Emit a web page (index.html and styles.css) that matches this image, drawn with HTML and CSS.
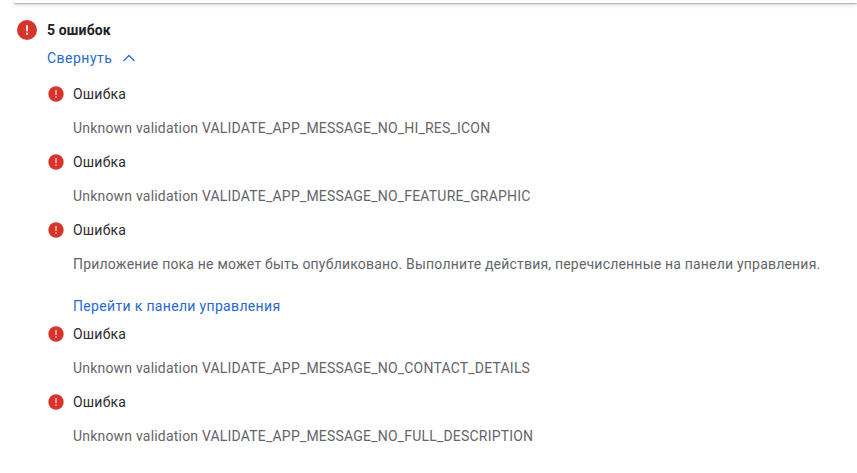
FILE: index.html
```html
<!DOCTYPE html>
<html lang="ru">
<head>
  <meta charset="UTF-8">
  <title>Ошибки</title>
  <link rel="stylesheet" href="styles.css">
</head>
<body>
  <div class="top-line"></div>

  <div class="summary">
    <svg class="icon-big" viewBox="0 0 20 20"><circle cx="10" cy="10" r="10" fill="#d6352c"/><path d="M10 5.2v6M10 12.8v2" stroke="#fff" stroke-width="1.7"/></svg>
    <div class="content">
      <h2 class="title">5 ошибок</h2>
      <a class="toggle" href="#">Свернуть
        <svg class="chevron" viewBox="0 0 12 8"><path d="M.5 7L6 1.5 11.500 7" fill="none" stroke="#2f6bcb" stroke-width="1.3"/></svg>
      </a>

      <ul class="errors">
        <li class="error">
          <svg class="icon" viewBox="0 0 16 16"><circle cx="8" cy="8" r="7.700" fill="#d6352c"/><path d="M8 4v5M8 10.300v1.600" stroke="#fbdcda" stroke-width="1.200"/></svg>
          <div class="error-body">
            <h3>Ошибка</h3>
            <p>Unknown validation VALIDATE_APP_MESSAGE_NO_HI_RES_ICON</p>
          </div>
        </li>
        <li class="error">
          <svg class="icon" viewBox="0 0 16 16"><circle cx="8" cy="8" r="7.700" fill="#d6352c"/><path d="M8 4v5M8 10.300v1.600" stroke="#fbdcda" stroke-width="1.200"/></svg>
          <div class="error-body">
            <h3>Ошибка</h3>
            <p>Unknown validation VALIDATE_APP_MESSAGE_NO_FEATURE_GRAPHIC</p>
          </div>
        </li>
        <li class="error">
          <svg class="icon" viewBox="0 0 16 16"><circle cx="8" cy="8" r="7.700" fill="#d6352c"/><path d="M8 4v5M8 10.300v1.600" stroke="#fbdcda" stroke-width="1.200"/></svg>
          <div class="error-body">
            <h3>Ошибка</h3>
            <p>Приложение пока не может быть опубликовано. Выполните действия, перечисленные на панели управления.</p>
            <a class="link" href="#">Перейти к панели управления</a>
          </div>
        </li>
        <li class="error">
          <svg class="icon" viewBox="0 0 16 16"><circle cx="8" cy="8" r="7.700" fill="#d6352c"/><path d="M8 4v5M8 10.300v1.600" stroke="#fbdcda" stroke-width="1.200"/></svg>
          <div class="error-body">
            <h3>Ошибка</h3>
            <p>Unknown validation VALIDATE_APP_MESSAGE_NO_CONTACT_DETAILS</p>
          </div>
        </li>
        <li class="error">
          <svg class="icon" viewBox="0 0 16 16"><circle cx="8" cy="8" r="7.700" fill="#d6352c"/><path d="M8 4v5M8 10.300v1.600" stroke="#fbdcda" stroke-width="1.200"/></svg>
          <div class="error-body">
            <h3>Ошибка</h3>
            <p>Unknown validation VALIDATE_APP_MESSAGE_NO_FULL_DESCRIPTION</p>
          </div>
        </li>
      </ul>
    </div>
  </div>
</body>
</html>
```
FILE: styles.css
```css
body {
  margin: 0;
  background: #fff;
  font-family: Roboto, sans-serif;
  font-size: 14px;
  line-height: 20px;
  letter-spacing: 0.2px;
  color: #2b2c2f;
  overflow: hidden;
}

.top-line {
  height: 3px;
  margin-left: 14px;
  background: #fff;
  box-shadow: 0 1px 2px rgba(0, 0, 0, 0.3), 0 2px 5px rgba(0, 0, 0, 0.12);
}

.summary {
  display: flex;
  gap: 10px;
  padding: 17px 0 0 17px;
}

.icon-big {
  width: 20px;
  height: 20px;
  flex: none;
}

.title {
  margin: 0;
  font-size: 14px;
  font-weight: 700;
  letter-spacing: 0.15px;
  color: #202124;
}

.toggle {
  display: flex;
  align-items: center;
  gap: 11px;
  margin-top: 8px;
  color: #2a69cb;
  letter-spacing: 0.48px;
  text-decoration: none;
}

.chevron {
  width: 12px;
  height: 8px;
}

.errors {
  list-style: none;
  margin: 16px 0 0;
  padding: 0;
}

.error {
  display: flex;
  gap: 9px;
  margin-bottom: 14px;
  padding-left: 1px;
}

.icon {
  width: 16px;
  height: 16px;
  margin-top: 2px;
  flex: none;
}

.error h3 {
  margin: 0 0 14px;
  font-size: 14px;
  font-weight: 400;
}

.error p {
  margin: 0;
  color: #636569;
  white-space: nowrap;
}

.link {
  display: block;
  margin: 22px 0 -6px;
  color: #2a69cb;
  letter-spacing: 0.33px;
  text-decoration: none;
}
```
